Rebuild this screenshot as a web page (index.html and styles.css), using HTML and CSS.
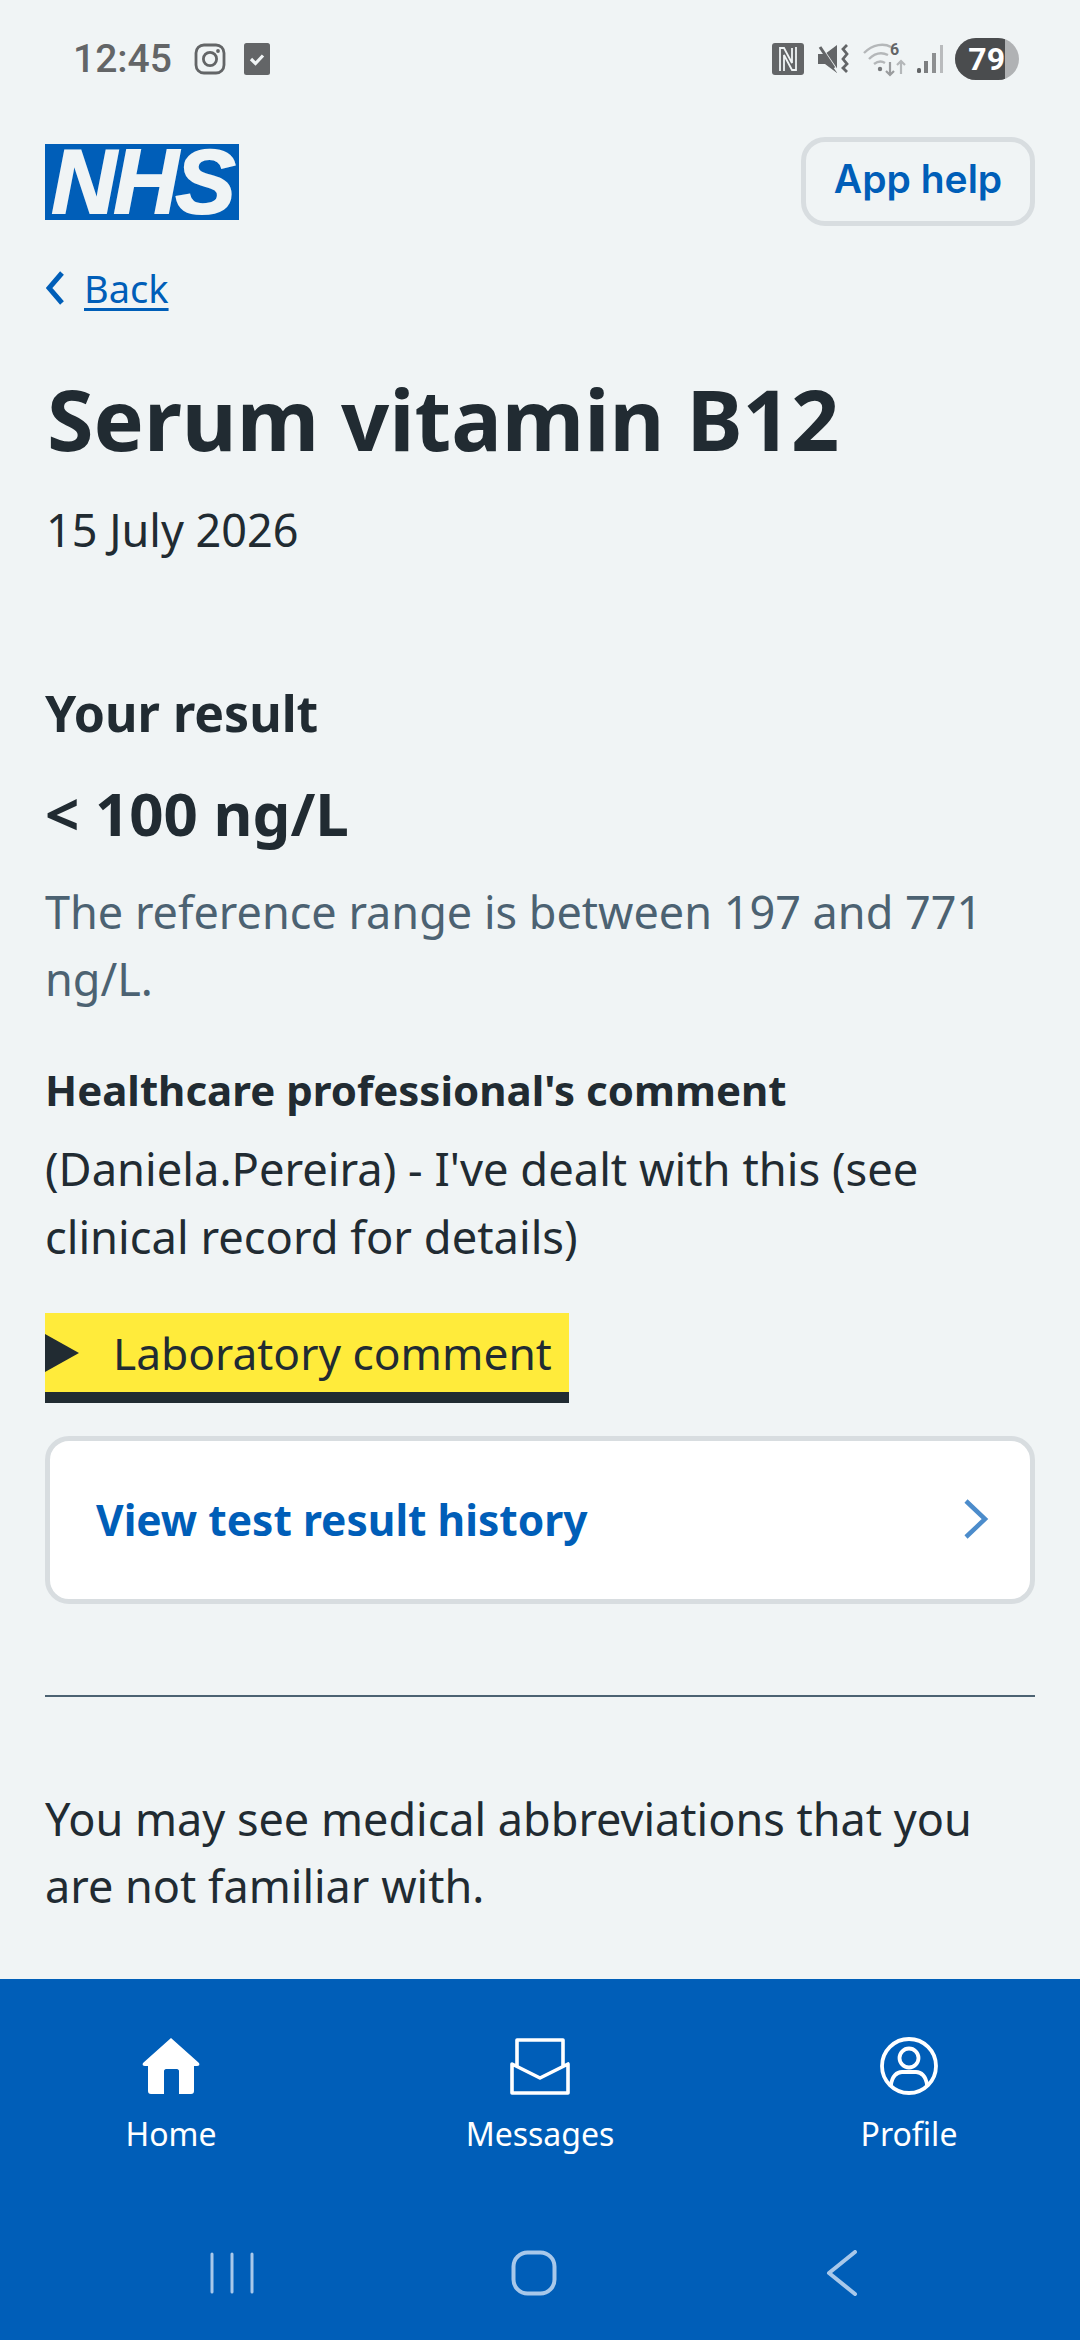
FILE: index.html
```html
<!DOCTYPE html>
<html>

<head>
    <title>Serum vitamin B12 | NHS App</title>
    <meta charset="utf-8">
    <link rel="stylesheet" href="styles.css">
</head>

<body>
    <div class="statusbar">
        <div class="statusleft">
            <span class="clock">12:45</span>
            <svg class="insta" width="32" height="32" viewBox="0 0 32 32">
                <rect x="2" y="2" width="28" height="28" rx="8" fill="none" stroke="#636567" stroke-width="2.8"/>
                <circle cx="16" cy="16" r="6.6" fill="none" stroke="#636567" stroke-width="2.8"/>
                <circle cx="24" cy="8" r="1.9" fill="#636567"/>
            </svg>
            <svg width="26" height="32" viewBox="0 0 26 32">
                <rect width="26" height="32" rx="2.5" fill="#636567"/>
                <path d="M7 16l4.500 4.500L19 12.500" fill="none" stroke="#f0f4f5" stroke-width="3.200"/>
            </svg>
        </div>
        <div class="statusright">
            <svg class="nfcicon" width="32" height="32" viewBox="0 0 32 32">
                <rect width="32" height="32" rx="3" fill="#636567"/>
                <path d="M8 28V5h4l8 15V5M24 4v23h-4l-8-15v16" fill="none" stroke="#f0f4f5" stroke-width="1.800"/>
            </svg>
            <svg class="muteicon" width="32" height="30" viewBox="0 0 32 30">
                <path d="M0 10h7L19 1v28L7 20H0z" fill="#636567"/>
                <path d="M1 0l19 28" stroke="#f0f4f5" stroke-width="2.400"/>
                <path d="M2 3l14 21" stroke="#636567" stroke-width="3"/>
                <path d="M29 1l-4 4 4 5-4 5 4 5-4 4 4 4" fill="none" stroke="#636567" stroke-width="2.800"/>
            </svg>
            <svg class="wifiicon" width="44" height="36" viewBox="0 0 44 36">
                <path d="M1 12c9-9 20-10 27-6M6 18c6-6 13-7 19-4M11 23c4-3 8-3 11-1" fill="none" stroke="#b4b7b9" stroke-width="2.400"/>
                <circle cx="17" cy="28" r="2.200" fill="#77797b"/>
                <text class="wifinum" x="27" y="14">6</text>
                <path d="M27 21v13m-4-4l4 4 4-4" fill="none" stroke="#9a9c9e" stroke-width="2.200"/>
                <path d="M38 33V20m-4 4l4-4 4 4" fill="none" stroke="#b4b7b9" stroke-width="2.200"/>
            </svg>
            <svg class="signalicon" width="28" height="30" viewBox="0 0 28 30">
                <rect x="1" y="24" width="4" height="5" rx="1.500" fill="#636567"/>
                <rect x="8" y="17" width="4" height="12" fill="#7c7e80"/>
                <rect x="16" y="9" width="4" height="20" fill="#8d8f91"/>
                <rect x="24" y="1" width="3" height="28" fill="#b9bbbd"/>
            </svg>
            <div class="battery"><span class="batterylevel">79</span></div>
        </div>
    </div>

    <div class="content">
        <div class="topbar">
            <div class="nhslogo">NHS</div>
            <button class="apphelp" type="button">App help</button>
        </div>

        <a class="backlink" href="#">
            <svg width="18" height="34" viewBox="0 0 18 34">
                <path d="M16 2L3 17l13 15" fill="none" stroke="#005eb8" stroke-width="5"/>
            </svg>
            <span>Back</span>
        </a>

        <h1 class="pagetitle">Serum vitamin B12</h1>
        <p class="resultdate">15 July 2026</p>

        <h2 class="resulthead">Your result</h2>
        <p class="resultvalue">&lt; 100 ng/L</p>
        <p class="refrange">The reference range is between 197 and 771 ng/L.</p>

        <h3 class="commenthead">Healthcare professional's comment</h3>
        <p class="commenttext">(Daniela.Pereira) - I've dealt with this (see clinical record for details)</p>

        <div class="labcomment">
            <span class="labarrow"></span>
            <span>Laboratory comment</span>
        </div>

        <a class="historycard" href="#">
            <span>View test result history</span>
            <svg width="26" height="40" viewBox="0 0 26 40">
                <path d="M3 2l19 18L3 38" fill="none" stroke="#4c8ccb" stroke-width="4.500"/>
            </svg>
        </a>

        <hr class="divider">

        <p class="abbrev">You may see medical abbreviations that you are not familiar with.</p>
    </div>

    <div class="bottomnav">
        <div class="tabs">
            <div class="tab">
                <svg width="60" height="60" viewBox="0 0 60 60">
                    <path d="M30 2L58 27c1 2 0 3-2 3h-3v25c0 2-1 3-3 3H38V35c0-1-1-2-2-2H25c-1 0-2 1-2 2v23H10c-2 0-3-1-3-3V30H4c-2 0-3-1-2-3z" fill="#fff"/>
                </svg>
                <span>Home</span>
            </div>
            <div class="tab">
                <svg width="60" height="60" viewBox="0 0 60 60">
                    <path d="M7 30V4h46v26M2 28l28 14 28-14v29H2z" fill="none" stroke="#fff" stroke-width="3.600" stroke-linejoin="round"/>
                </svg>
                <span>Messages</span>
            </div>
            <div class="tab">
                <svg width="60" height="60" viewBox="0 0 60 60">
                    <circle cx="30" cy="30" r="27" fill="none" stroke="#fff" stroke-width="3.800"/>
                    <circle cx="30" cy="22" r="9.500" fill="none" stroke="#fff" stroke-width="3.800"/>
                    <path d="M12 49c1-9 6-13 11-13h14c5 0 10 4 11 13" fill="none" stroke="#fff" stroke-width="3.800"/>
                </svg>
                <span>Profile</span>
            </div>
        </div>
        <div class="sysnav">
            <svg width="44" height="42" viewBox="0 0 44 42">
                <path d="M2 2v38M22 2v38M42 2v38" stroke="#a8c8ea" stroke-width="3" stroke-linecap="round"/>
            </svg>
            <svg width="46" height="46" viewBox="0 0 46 46">
                <rect x="2.500" y="2.500" width="41" height="41" rx="14" fill="none" stroke="#a8c8ea" stroke-width="4"/>
            </svg>
            <svg width="32" height="46" viewBox="0 0 32 46">
                <path d="M29 2L3 23l26 21" fill="none" stroke="#a8c8ea" stroke-width="4" stroke-linecap="round" stroke-linejoin="round"/>
            </svg>
        </div>
    </div>
</body>

</html>
```

FILE: styles.css
```css
* {
    box-sizing: border-box;
}

html,
body {
    margin: 0;
    height: 2340px;
    overflow: hidden;
}

body {
    background-color: #f0f4f5;
    color: #212b32;
    font-family: "Noto Sans", "Open Sans", sans-serif;
    display: flex;
    flex-direction: column;
}

p,
h1,
h2,
h3 {
    margin: 0;
}

/* status bar */
.statusbar {
    height: 116px;
    padding: 37px 61px 0 73px;
    display: flex;
    justify-content: space-between;
    align-items: flex-start;
}

.statusleft,
.statusright {
    display: flex;
    align-items: center;
    height: 44px;
}

.statusleft {
    gap: 18px;
}

.clock {
    font-family: Roboto, sans-serif;
    font-weight: 500;
    font-size: 39px;
    color: #636567;
    margin-right: 4px;
}

.wifinum {
    font-family: Roboto, sans-serif;
    font-weight: 700;
    font-size: 16px;
    fill: #636567;
}

.nfcicon {
    margin-right: 14px;
}

.muteicon {
    margin-right: 13px;
}

.wifiicon {
    margin-right: 9px;
}

.signalicon {
    margin-right: 11px;
}

.battery {
    width: 64px;
    height: 42px;
    border-radius: 21px;
    background-color: #b0b2b4;
    overflow: hidden;
}

.batterylevel {
    display: block;
    width: 50px;
    height: 42px;
    background-color: #4a4c4e;
    color: #fff;
    font-family: Roboto, sans-serif;
    font-weight: 700;
    font-size: 32px;
    line-height: 42px;
    text-align: right;
}

/* page content */
.content {
    flex: 1;
    padding: 21px 45px 0 45px;
    overflow: hidden;
}

.topbar {
    display: flex;
    justify-content: space-between;
    align-items: flex-start;
}

.nhslogo {
    width: 194px;
    height: 76px;
    margin-top: 7px;
    background-color: #005eb8;
    color: #f0f4f5;
    font-family: "Liberation Sans", Arial, sans-serif;
    font-weight: 700;
    font-style: italic;
    font-size: 90px;
    line-height: 76px;
    letter-spacing: -3px;
    text-align: center;
    -webkit-text-stroke: 2px #f0f4f5;
}

.apphelp {
    width: 234px;
    height: 89px;
    padding: 0 0 7px;
    border: 5px solid #d8dde0;
    border-radius: 24px;
    background-color: #f0f4f5;
    color: #005eb8;
    font-family: Inter, "Noto Sans", sans-serif;
    font-weight: 600;
    font-size: 39px;
}

.backlink {
    display: flex;
    align-items: center;
    gap: 20px;
    height: 56px;
    margin-top: 34px;
    color: #005eb8;
    font-size: 38px;
    text-decoration: none;
}

.backlink svg {
    margin-left: 1px;
}

.backlink span {
    text-decoration: underline;
    text-decoration-thickness: 3px;
    text-underline-offset: 5px;
}

.pagetitle {
    margin-top: 47px;
    font-size: 84.500px;
    line-height: 112px;
    font-weight: 700;
    padding-left: 2px;
}

.resultdate {
    margin-top: 25px;
    font-size: 45px;
    line-height: 60px;
    padding-left: 1px;
}

.resulthead {
    margin-top: 121px;
    font-size: 50px;
    line-height: 64px;
    font-weight: 700;
}

.resultvalue {
    margin-top: 32px;
    font-size: 60px;
    line-height: 72px;
    font-weight: 700;
}

.refrange {
    margin-top: 29px;
    font-size: 45px;
    line-height: 67px;
    color: #4c6272;
}

.commenthead {
    margin-top: 48px;
    font-size: 42px;
    line-height: 60px;
    font-weight: 700;
}

.commenttext {
    margin-top: 15px;
    font-size: 45.300px;
    line-height: 68px;
}

.labcomment {
    display: inline-flex;
    align-items: center;
    gap: 34px;
    height: 90px;
    margin-top: 42px;
    padding-right: 17px;
    background-color: #ffeb3b;
    border-bottom: 11px solid #212b32;
    font-size: 44.300px;
}

.labarrow {
    width: 0;
    height: 0;
    border-left: 34px solid #212b32;
    border-top: 19px solid transparent;
    border-bottom: 19px solid transparent;
}

.historycard {
    display: flex;
    justify-content: space-between;
    align-items: center;
    height: 168px;
    margin-top: 33px;
    padding: 0 41px 2px 46px;
    background-color: #fff;
    border: 5px solid #d8dde0;
    border-radius: 24px;
    color: #005eb8;
    font-size: 42.500px;
    font-weight: 700;
    text-decoration: none;
}

.divider {
    height: 2px;
    margin: 91px 0 0;
    border: none;
    background-color: #4c6272;
}

.abbrev {
    margin-top: 88px;
    font-size: 45px;
    line-height: 67px;
}

/* bottom nav */
.bottomnav {
    height: 361px;
    background-color: #005eb8;
}

.tabs {
    height: 261px;
    padding-top: 57px;
    display: grid;
    grid-template-columns: 342px 396px 342px;
}

.tab {
    display: flex;
    flex-direction: column;
    align-items: center;
    gap: 16px;
    color: #fff;
    font-size: 32px;
    line-height: 44px;
}

.sysnav {
    display: grid;
    grid-template-columns: 464px 140px 476px;
    justify-items: center;
    align-items: center;
    height: 66px;
}
```
